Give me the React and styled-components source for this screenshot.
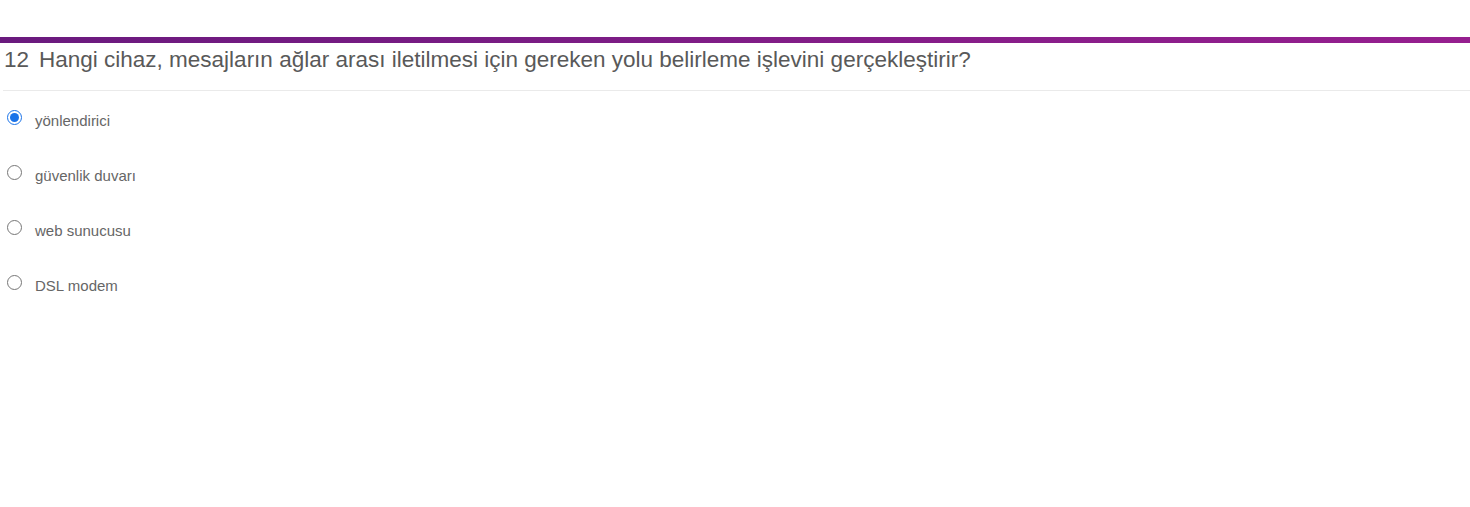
import * as React from "react"
import styled, { createGlobalStyle } from "styled-components"

const GlobalStyle = createGlobalStyle`
    body {
        margin: 0;
        background: #fff;
        font-family: "Liberation Sans", Arial, sans-serif;
    }
`;

//question card
const Page = styled.main`
    padding-top: 37px;
`;

const TopBar = styled.div`
    height: 6px;
    background: linear-gradient(to right, #6a1a7e, #961f8f);
`;

const Question = styled.h2`
    margin: 0 0 0 3px;
    padding: 3px 0 0 1px;
    height: 48px;
    box-sizing: border-box;
    border-bottom: 1px solid #eaeaea;
    font-size: 22.5px;
    font-weight: normal;
    color: #595959;
    line-height: 28px;
    display: flex;
    gap: 10px;
`;

const Number = styled.span``;

const Options = styled.ul`
    list-style: none;
    margin: 0;
    padding: 18px 0 0 7px;
    display: flex;
    flex-direction: column;
    gap: 33px;
`;

const Option = styled.li`
    display: flex;
    align-items: center;
    gap: 13px;
    height: 22px;
`;

const Radio = styled.input`
    margin: 0;
    width: 15px;
    height: 15px;
    accent-color: #1a73e8;
    position: relative;
    top: -3px;
`;

const Label = styled.label`
    font-size: 15px;
    color: #666;
`;

const answers = ["yönlendirici", "güvenlik duvarı", "web sunucusu", "DSL modem"];

const App = () => {
    return (
        <Page>
            <GlobalStyle />
            <TopBar />
            <Question>
                <Number>12</Number>
                <span>Hangi cihaz, mesajların ağlar arası iletilmesi için gereken yolu belirleme işlevini gerçekleştirir?</span>
            </Question>
            <Options>
                {answers.map((a, i) => (
                    <Option key={a}>
                        <Radio type="radio" name="q12" id={"opt" + i} defaultChecked={i === 0} />
                        <Label htmlFor={"opt" + i}>{a}</Label>
                    </Option>
                ))}
            </Options>
        </Page>
    )
}

export default App
